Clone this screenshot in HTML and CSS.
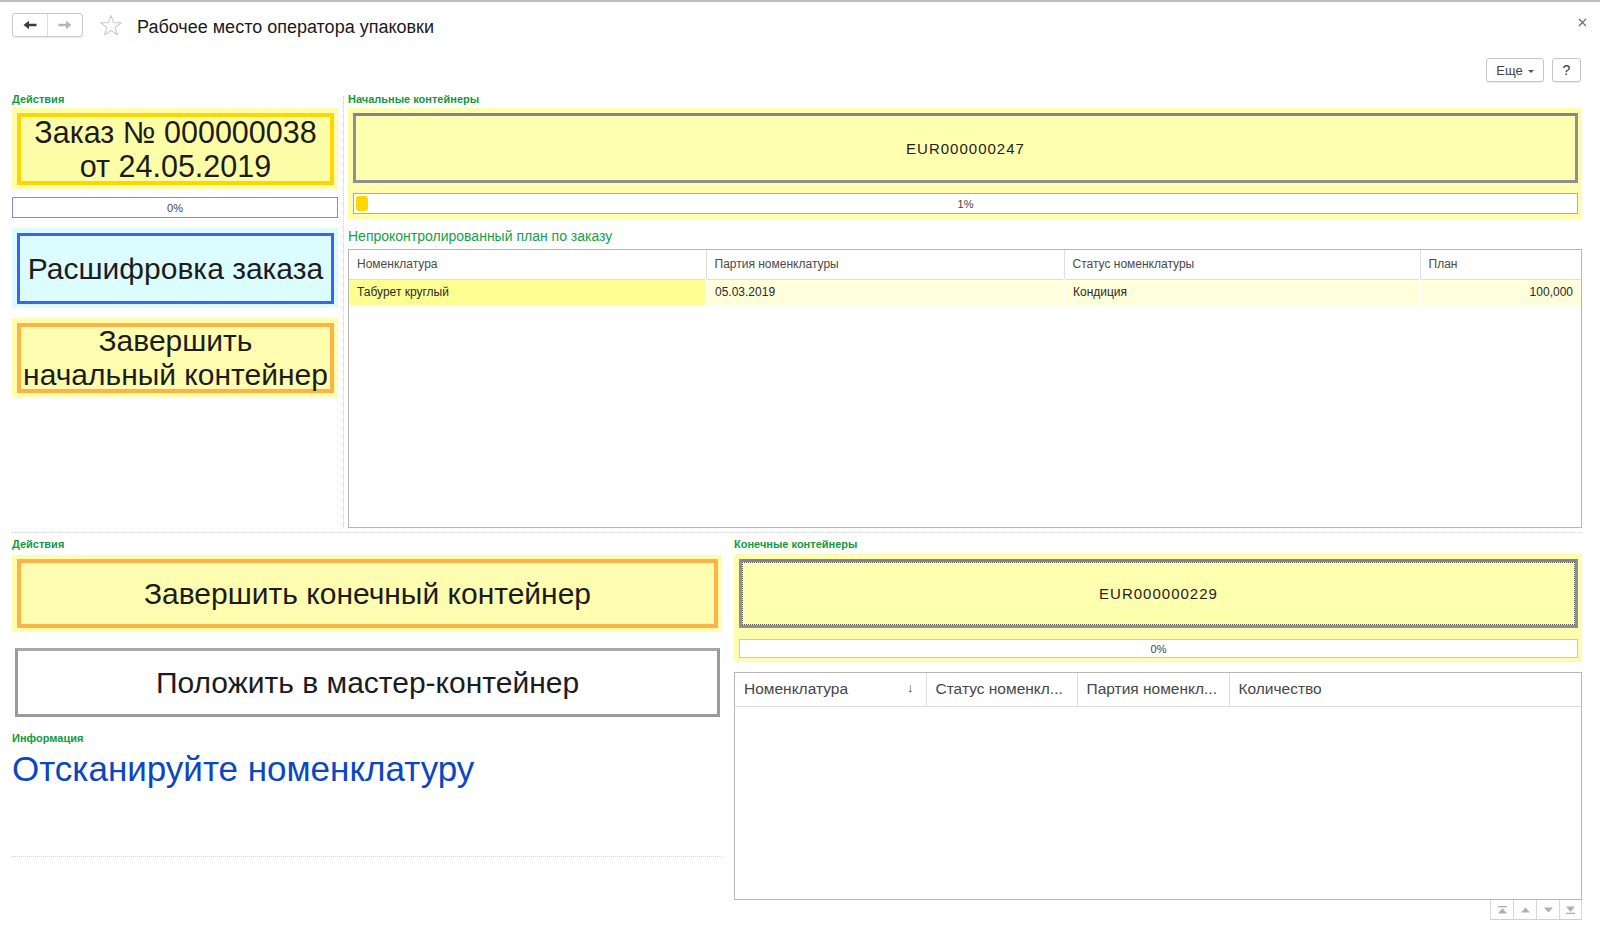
FILE: index.html
```html
<!DOCTYPE html>
<html lang="ru">
<head>
<meta charset="utf-8">
<title>Рабочее место оператора упаковки</title>
<link rel="stylesheet" href="styles.css">
</head>
<body>
<div class="topline"></div>
<header class="titlebar">
  <div class="nav">
    <button class="nav-btn"><svg width="14" height="10" viewBox="0 0 14 10"><path d="M0.5 5 L6 0.8 L6 3.8 L13.5 3.8 L13.5 6.2 L6 6.2 L6 9.2 Z" fill="#3c3c3c"/></svg></button>
    <button class="nav-btn"><svg width="14" height="10" viewBox="0 0 14 10"><path d="M13.5 5 L8 0.8 L8 3.8 L0.5 3.8 L0.5 6.2 L8 6.2 L8 9.2 Z" fill="#b4b4b4"/></svg></button>
  </div>
  <svg class="star" width="24" height="23" viewBox="0 0 24 23"><polygon points="12,1.5 14.6,8.6 22.2,8.8 16.2,13.4 18.4,20.8 12,16.5 5.6,20.8 7.8,13.4 1.8,8.8 9.4,8.6" fill="none" stroke="#c3cbd8" stroke-width="1.1" stroke-linejoin="round"/></svg>
  <h1 class="title">Рабочее место оператора упаковки</h1>
  <button class="close"><svg width="9" height="9" viewBox="0 0 9 9"><path d="M1 1 L8 8 M8 1 L1 8" stroke="#6a6a6a" stroke-width="1.2"/></svg></button>
</header>
<div class="cmdbar">
  <button class="cmd more">Еще <span class="caret"></span></button>
  <button class="cmd help">?</button>
</div>
<main class="form">
  <section class="row row1">
    <div class="col col-actions">
      <div class="group-label">Действия</div>
      <div class="tile tile-gold"><div class="tile-inner">Заказ № 000000038<br>от 24.05.2019</div></div>
      <div class="progress progress-blue"><span class="pct">0%</span></div>
      <div class="tile tile-cyan"><div class="tile-inner">Расшифровка заказа</div></div>
      <div class="tile tile-orange"><div class="tile-inner">Завершить<br>начальный контейнер</div></div>
    </div>
    <div class="vsep"></div>
    <div class="col col-main">
      <div class="group-label">Начальные контейнеры</div>
      <div class="container-box">
        <div class="container-field">EUR000000247</div>
        <div class="progress progress-red"><div class="fill" style="width:1%"></div><span class="pct">1%</span></div>
      </div>
      <div class="plan-title">Непроконтролированный план по заказу</div>
      <div class="grid grid-plan">
        <table>
          <colgroup><col class="c1"><col class="c2"><col class="c3"><col></colgroup>
          <thead>
            <tr><th>Номенклатура</th><th>Партия номенклатуры</th><th>Статус номенклатуры</th><th>План</th></tr>
          </thead>
          <tbody>
            <tr><td class="cur">Табурет круглый</td><td>05.03.2019</td><td>Кондиция</td><td class="num">100,000</td></tr>
          </tbody>
        </table>
      </div>
    </div>
  </section>
  <div class="hsep"></div>
  <section class="row row2">
    <div class="col col-actions2">
      <div class="group-label">Действия</div>
      <div class="tile tile-orange tile-wide"><div class="tile-inner">Завершить конечный контейнер</div></div>
      <button class="master-btn">Положить в мастер-контейнер</button>
      <div class="group-label info-label">Информация</div>
      <div class="info-text">Отсканируйте номенклатуру</div>
      <div class="info-sep"></div>
    </div>
    <div class="col col-main2">
      <div class="group-label">Конечные контейнеры</div>
      <div class="container-box end-box">
        <div class="container-field focused">EUR000000229</div>
        <div class="progress progress-green"><span class="pct">0%</span></div>
      </div>
      <div class="grid grid-result">
        <table>
          <colgroup><col class="d1"><col class="d2"><col class="d3"><col></colgroup>
          <thead>
            <tr><th><span class="sort-head">Номенклатура<span class="sort">↓</span></span></th><th>Статус номенкл...</th><th>Партия номенкл...</th><th>Количество</th></tr>
          </thead>
          <tbody></tbody>
        </table>
      </div>
      <div class="scroller">
        <button class="sbtn"><svg width="11" height="8" viewBox="0 0 11 8"><rect x="1" y="0" width="9" height="1.3" fill="#b0b0b0"/><polygon points="5.5,2 10,7.5 1,7.5" fill="#b0b0b0"/></svg></button>
        <button class="sbtn"><svg width="11" height="8" viewBox="0 0 11 8"><polygon points="5.5,1.5 10,6.5 1,6.5" fill="#b0b0b0"/></svg></button>
        <button class="sbtn"><svg width="11" height="8" viewBox="0 0 11 8"><polygon points="1,1.5 10,1.5 5.5,6.5" fill="#b0b0b0"/></svg></button>
        <button class="sbtn"><svg width="11" height="8" viewBox="0 0 11 8"><polygon points="1,0.5 10,0.5 5.5,6" fill="#b0b0b0"/><rect x="1" y="6.7" width="9" height="1.3" fill="#b0b0b0"/></svg></button>
      </div>
    </div>
  </section>
</main>
</body>
</html>
```

FILE: styles.css
```css
* { box-sizing: border-box; }
html, body { margin: 0; padding: 0; background: #fff; }
body {
  font-family: "Liberation Sans", Arial, sans-serif;
  color: #333;
  width: 1600px;
  height: 931px;
  overflow: hidden;
}
button { font-family: inherit; cursor: default; }

.topline { height: 2px; background: #bdbdbd; }

.titlebar {
  display: flex;
  align-items: center;
  height: 48px;
  padding: 0 13px 0 12px;
}
.nav {
  display: flex;
  width: 71px;
  height: 24px;
  border: 1px solid #c9c9c9;
  border-radius: 3px;
  background: #fff;
  box-shadow: 0 1px 1px rgba(0,0,0,0.08);
  margin-top: -3px;
}
.nav-btn {
  flex: 1;
  border: 0;
  background: transparent;
  padding: 0;
  display: flex;
  align-items: center;
  justify-content: center;
}
.nav-btn + .nav-btn { border-left: 1px solid #dcdcdc; }
.star { margin-left: 16px; margin-top: -1px; }
.title {
  margin: 3px 0 0 14px;
  font-size: 18px;
  font-weight: normal;
  color: #1a1a1a;
}
.close {
  margin-left: auto;
  margin-top: -8px;
  border: 0;
  background: transparent;
  padding: 0;
  display: flex;
}

.cmdbar {
  display: flex;
  justify-content: flex-end;
  gap: 8px;
  padding: 8px 19px 6px 0;
  height: 38px;
}
.cmd {
  height: 24px;
  border: 1px solid #c6c6c6;
  border-radius: 3px;
  background: #fff;
  box-shadow: 0 1px 1px rgba(0,0,0,0.07);
  font-size: 13px;
  color: #444;
  padding: 0;
}
.more { width: 58px; display: flex; align-items: center; justify-content: center; gap: 5px; }
.caret {
  width: 0; height: 0;
  border-left: 3px solid transparent;
  border-right: 3px solid transparent;
  border-top: 3px solid #555;
  margin-top: 2px;
}
.help { width: 29px; font-size: 14px; color: #333; }

.form { padding: 0 18px 0 12px; }
.row { display: flex; }

.group-label {
  font-size: 11px;
  font-weight: bold;
  color: #109a3e;
  line-height: 14px;
  height: 14px;
  margin-top: 4px;
  margin-bottom: 2px;
}

/* row 1 */
.col-actions { width: 326px; display: flex; flex-direction: column; }
.vsep { width: 1px; margin: 8px 4px 0 5px; border-left: 1px dotted #cfcfcf; }
.col-main { flex: 1; display: flex; flex-direction: column; }

.tile {
  padding: 5px 4px 4px 5px;
}
.tile-inner {
  display: flex;
  align-items: center;
  justify-content: center;
  text-align: center;
  font-size: 30px;
  line-height: 34px;
  color: #1c1c1c;
  height: 100%;
}
.tile-gold { background: #fffdae; height: 81px; }
.tile-gold .tile-inner { border: 4px solid #ffd700; background: #fffea8; font-size: 30.5px; }
.tile-cyan { background: #dcfbff; height: 80px; margin-top: 10px; }
.tile-cyan .tile-inner { border: 3px solid #3c64ee; background: #dcfdff; }
.tile-orange { background: #fffdae; height: 79px; margin-top: 10px; }
.tile-orange .tile-inner { border: 4px solid #ffb347; background: #fffeb0; }

.progress {
  position: relative;
  height: 21px;
  background: #fff;
  display: flex;
  align-items: center;
  justify-content: center;
}
.progress .pct { position: relative; font-size: 11px; color: #444; }
.progress-blue { border: 1px solid #7d8de6; margin-top: 8px; }
.progress-red { border: 1px solid #e29797; margin-top: 10px; }
.progress-red .fill {
  position: absolute;
  left: 2px; top: 2px; bottom: 2px;
  background: #ffd700;
  border-radius: 3px;
}
.progress-green { border: 1px solid #a3e3a3; margin-top: 11px; height: 19px; }

.container-box {
  background: #fffdae;
  padding: 5px 4px 5px 5px;
}
.container-field {
  height: 70px;
  border: 3px solid #8f8f8f;
  border-top-color: #858585;
  background: #ffffb0;
  display: flex;
  align-items: center;
  justify-content: center;
  font-size: 15px;
  letter-spacing: 1px;
  color: #222;
}
.container-field.focused { outline: 1px dotted #555; outline-offset: -4px; height: 69px; }

.plan-title {
  font-size: 14px;
  color: #13a048;
  line-height: 17px;
  margin-top: 9px;
  margin-bottom: 4px;
}

.grid {
  border: 1px solid #b7b7b7;
  background: #fff;
}
.grid table {
  width: 100%;
  border-collapse: collapse;
  table-layout: fixed;
}
.grid th {
  text-align: left;
  font-weight: normal;
  color: #4a4a4a;
  white-space: nowrap;
  overflow: hidden;
  border-bottom: 1px solid #dedede;
  border-right: 1px solid #dedede;
}
.grid th:last-child { border-right: 0; }
.grid-plan { height: 279px; }
.grid-plan col.c1 { width: 357px; }
.grid-plan col.c2 { width: 358px; }
.grid-plan col.c3 { width: 356px; }
.grid-plan th { height: 29px; font-size: 12px; padding: 0 8px; }
.grid-plan td {
  height: 26px;
  font-size: 12px;
  color: #2a2a2a;
  padding: 0 8px;
  background: #ffffdc;
  border-right: 2px solid #fff;
}
.grid-plan td:last-child { border-right: 0; }
.grid-plan td.cur { background: #ffff91; }
.grid-plan td.num { text-align: right; }

.hsep { height: 1px; border-top: 1px dotted #cfcfcf; margin-top: 4px; }

/* row 2 */
.row2 { gap: 12px; margin-top: 0; }
.col-actions2 { width: 710px; display: flex; flex-direction: column; }
.col-main2 { flex: 1; display: flex; flex-direction: column; }
.tile-wide { height: 77px; margin-top: 2px; padding: 4px 4px 4px 5px; }
.master-btn {
  height: 69px;
  margin: 16px 2px 0 3px;
  border: 3px solid #9a9a9a;
  border-top-color: #a8a8a8;
  background: #fff;
  font-size: 30px;
  color: #1c1c1c;
  padding: 0;
}
.info-label { margin-top: 14px; }
.info-text {
  font-size: 35px;
  line-height: 40px;
  color: #0b47c1;
  margin-top: 2px;
}
.info-sep { border-top: 1px dotted #d2d2d2; margin-top: 67px; }

.end-box { margin-top: 1px; padding-bottom: 4px; }

.grid-result { height: 228px; margin-top: 10px; }
.grid-result col.d1 { width: 191px; }
.grid-result col.d2 { width: 151px; }
.grid-result col.d3 { width: 152px; }
.grid-result th { height: 33px; font-size: 15.5px; padding: 0 9px; color: #474747; }
.sort-head { display: flex; justify-content: space-between; }
.sort { font-size: 13px; color: #444; font-weight: bold; padding-right: 3px; }

.scroller { display: flex; justify-content: flex-end; }
.sbtn {
  width: 23px;
  height: 20px;
  border: 0;
  border-left: 1px solid #d6d6d6;
  border-bottom: 1px solid #d0d0d0;
  background: #fff;
  padding: 0;
  display: flex;
  align-items: center;
  justify-content: center;
}
.sbtn:last-child { border-right: 1px solid #d6d6d6; }
```
